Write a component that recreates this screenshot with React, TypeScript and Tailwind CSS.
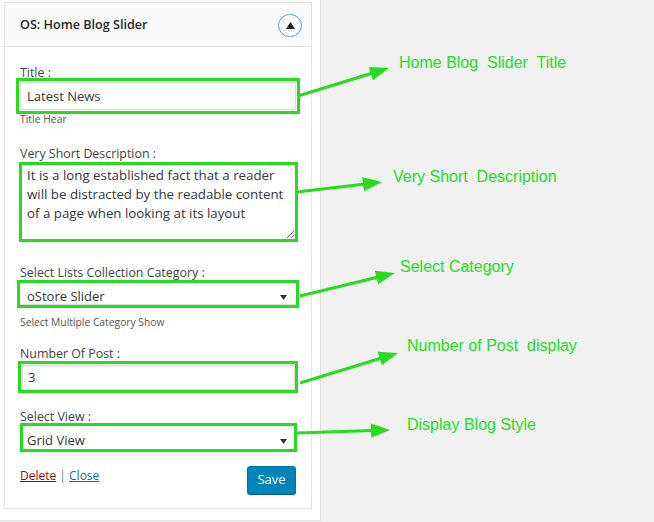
import React from "react";

const G = "#25dd1d";

function arrow(x1: number, y1: number, x2: number, y2: number) {
  const dx = x2 - x1;
  const dy = y2 - y1;
  const len = Math.sqrt(dx * dx + dy * dy);
  const ux = dx / len;
  const uy = dy / len;
  const L = 19;
  const W = 7;
  const bx = x2 - ux * L;
  const by = y2 - uy * L;
  const nx = -uy;
  const ny = ux;
  const pts = `${x2},${y2} ${bx + nx * W},${by + ny * W} ${bx - nx * W},${by - ny * W}`;
  return { line: { x1, y1, x2: bx + ux * 2, y2: by + uy * 2 }, pts };
}

const arrows = [
  arrow(298, 96, 389, 68),
  arrow(297, 192, 382, 182),
  arrow(300, 296, 395, 273),
  arrow(300, 383, 398, 353),
  arrow(297, 433, 390, 430),
];

const notes = [
  { t: "Home Blog  Slider  Title", x: 399, y: 63 },
  { t: "Very Short  Description", x: 393, y: 177 },
  { t: "Select Category", x: 400, y: 267 },
  { t: "Number of Post  display", x: 407, y: 346 },
  { t: "Display Blog Style", x: 407, y: 425 },
];

function Caret() {
  return (
    <svg width="7" height="5" viewBox="0 0 7 5" className="shrink-0">
      <path d="M0 0 L7 0 L3.5 5 Z" fill="#333" />
    </svg>
  );
}

export default function App() {
  return (
    <div
      className="relative w-[654px] h-[522px] bg-[#f1f1f1] overflow-hidden"
      style={{ fontFamily: '"Open Sans", "Noto Sans", sans-serif' }}
    >
      <div className="w-[321px] h-[521px] bg-white border-r border-b border-[#e2e2e2] pt-[2px] pl-[4px]">
        <div className="w-[308px] border border-[#e5e5e5] bg-white">
          {/* header */}
          <div className="h-[44px] border-b border-[#e5e5e5] bg-[#fafafa] flex items-center justify-between pl-[15px] pr-[9px] pt-[2px]">
            <span className="text-[12.6px] font-semibold text-[#23282d] leading-none">OS: Home Blog Slider</span>
            <div className="w-[24px] h-[23px] rounded-full border-[1.5px] border-[#5b9dd9] flex items-center justify-center">
              <svg width="9" height="7" viewBox="0 0 9 7">
                <path d="M0 7 L9 7 L4.5 0 Z" fill="#1d2327" />
              </svg>
            </div>
          </div>

          {/* body */}
          <div className="px-[15px] pb-[14px] pt-[19px] text-[#32373c]">
            <div className="text-[12.4px] leading-[14px] text-[#3c434a]">Title :</div>
            <div className="mt-[-2px] ml-[-4px] w-[284px] h-[36px] border-[3px] p-px" style={{ borderColor: G }}>
              <div className="h-full border border-[#dddddd] shadow-[inset_0_1px_2px_rgba(0,0,0,0.07)] flex items-center pl-[6px] pt-[2px] text-[13px]">
                Latest News
              </div>
            </div>
            <div className="mt-[-2px] text-[10.4px] leading-[14px] text-[#555]">Title Hear</div>

            <div className="mt-[21px] text-[12.4px] leading-[14px] text-[#3c434a]">Very Short Description :</div>
            <div className="mt-px ml-[-1px] w-[279px] h-[80px] border-[3px]" style={{ borderColor: G }}>
              <textarea
                readOnly
                className="block w-full h-full resize-y border-0 outline-none pl-[5px] pr-[4px] pt-[1px] text-[13.3px] leading-[19px] text-[#32373c] bg-white"
                style={{ fontFamily: '"Open Sans", "Noto Sans", sans-serif' }}
                value="It is a long established fact that a reader will be distracted by the readable content of a page when looking at its layout"
              />
            </div>

            <div className="mt-[24px] text-[12.4px] leading-[14px] text-[#3c434a]">Select Lists Collection Category :</div>
            <div className="ml-[-3px] w-[282px] h-[28px] border-[3px]" style={{ borderColor: G }}>
              <div className="h-full border-b border-[#dddddd] flex items-center justify-between pl-[7px] pr-[9px] pt-[7px] text-[13px]">
                <span>oStore Slider</span>
                <Caret />
              </div>
            </div>
            <div className="mt-[7px] text-[10.3px] leading-[14px] text-[#555]">Select Multiple Category Show</div>

            <div className="mt-[18px] text-[12.4px] leading-[14px] text-[#3c434a]">Number Of Post :</div>
            <div className="ml-[-2px] w-[280px] h-[32px] border-[3px] pt-px pl-px" style={{ borderColor: G }}>
              <div className="h-full border border-[#dddddd] shadow-[inset_0_1px_2px_rgba(0,0,0,0.07)] flex items-center pl-[5px] text-[13px]">
                3
              </div>
            </div>

            <div className="mt-[17px] text-[12.4px] leading-[14px] text-[#3c434a]">Select View :</div>
            <div className="mt-[-1px] w-[277px] h-[29px] border-[3px]" style={{ borderColor: G }}>
              <div className="h-full flex items-center justify-between pl-[4px] pr-[7px] pt-[7px] text-[13px]">
                <span>Grid View</span>
                <Caret />
              </div>
            </div>

            <div className="mt-[14px] flex items-start justify-between">
              <div className="mt-[1px] text-[12px] leading-[18px]">
                <span className="text-[#a00] underline">Delete</span>
                <span className="text-[#72777c]"> | </span>
                <span className="text-[#0073aa] underline">Close</span>
              </div>
              <div className="w-[49px] h-[28px] rounded-[3px] bg-[#0085ba] border border-[#0073aa] shadow-[0_1px_0_#006799] flex items-center justify-center text-white text-[13px]">
                Save
              </div>
            </div>
          </div>
        </div>
      </div>

      {/* annotations */}
      <svg className="absolute left-0 top-0 pointer-events-none" width="654" height="522">
        {arrows.map((a, i) => (
          <g key={i}>
            <line {...a.line} stroke={G} strokeWidth="3" />
            <polygon points={a.pts} fill={G} />
          </g>
        ))}
      </svg>
      {notes.map((n, i) => (
        <div
          key={i}
          className="absolute whitespace-pre text-[16px] leading-[18px]"
          style={{ left: n.x, top: n.y - 9, color: G, fontFamily: '"Liberation Sans", Arial, sans-serif' }}
        >
          {n.t}
        </div>
      ))}
    </div>
  );
}
